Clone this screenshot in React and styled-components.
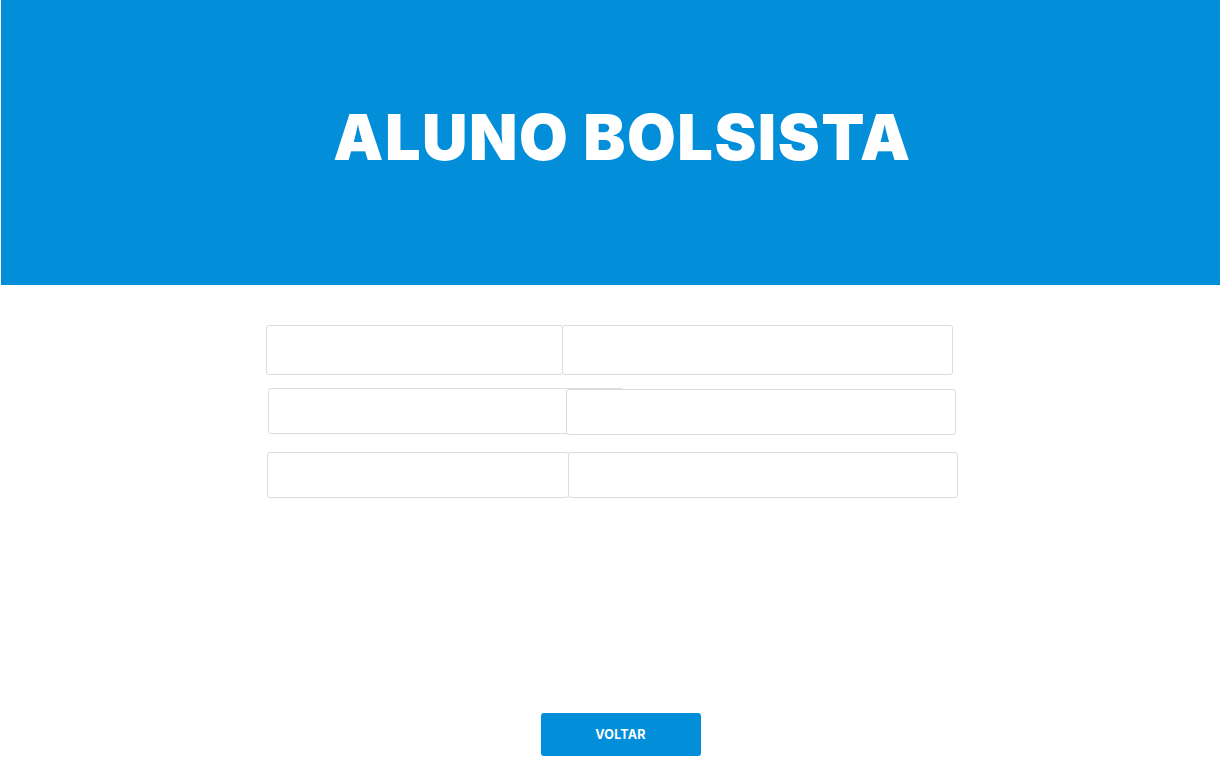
import React from "react";
import styled, { createGlobalStyle } from "styled-components";

const GlobalStyle = createGlobalStyle`
  html, body {
    margin: 0;
    padding: 0;
    background: #ffffff;
    font-family: "Inter", "Liberation Sans", sans-serif;
  }
`;

const Page = styled.div`
  width: 1220px;
  min-height: 768px;
  display: flex;
  flex-direction: column;
`;

const Banner = styled.header`
  margin-left: 1px;
  height: 285px;
  background: #038ed9;
  display: flex;
  align-items: center;
  justify-content: center;
  padding-left: 24px;
  box-sizing: border-box;
`;

const Title = styled.h1`
  margin: 0 0 10px 0;
  color: #ffffff;
  font-family: "Inter", "Liberation Sans", sans-serif;
  font-weight: 900;
  font-size: 63px;
  letter-spacing: 1.5px;
  line-height: 1;
  text-transform: uppercase;
`;

const Form = styled.form`
  display: flex;
  flex-direction: column;
  padding-top: 40px;
`;

const Row = styled.div`
  display: flex;
  align-items: flex-start;
  padding-left: ${({ $indent }) => $indent}px;
  margin-top: ${({ $gap }) => $gap}px;
`;

const Field = styled.input`
  box-sizing: border-box;
  width: ${({ $w }) => $w}px;
  height: ${({ $h }) => $h}px;
  margin-left: ${({ $shift }) => $shift || 0}px;
  margin-top: ${({ $drop }) => $drop || 0}px;
  border: 1px solid #dcdcdc;
  border-radius: 3px;
  background: #ffffff;
  padding: 0 12px;
  font-size: 14px;
  outline: none;
  position: relative;
`;

const Footer = styled.div`
  display: flex;
  justify-content: center;
  padding-left: 21px;
  margin-top: 215px;
`;

const BackButton = styled.button`
  width: 160px;
  height: 43px;
  border: none;
  border-radius: 3px;
  background: #038ed9;
  color: #ffffff;
  font-family: "Inter", "Liberation Sans", sans-serif;
  font-weight: 700;
  font-size: 12.5px;
  letter-spacing: 0.2px;
  cursor: pointer;
`;

const rows = [
  { indent: 266, gap: 0, left: { w: 297, h: 50 }, right: { w: 391, h: 50, shift: -1 } },
  { indent: 268, gap: 13, left: { w: 356, h: 46 }, right: { w: 390, h: 46, shift: -58, drop: 1 } },
  { indent: 267, gap: 17, left: { w: 302, h: 46 }, right: { w: 390, h: 46, shift: -1 } },
];

export default function App() {
  return (
    <Page>
      <GlobalStyle />
      <Banner>
        <Title>Aluno Bolsista</Title>
      </Banner>
      <Form onSubmit={(e) => e.preventDefault()}>
        {rows.map((row, i) => (
          <Row key={i} $indent={row.indent} $gap={row.gap}>
            <Field $w={row.left.w} $h={row.left.h} />
            <Field
              $w={row.right.w}
              $h={row.right.h}
              $shift={row.right.shift}
              $drop={row.right.drop}
            />
          </Row>
        ))}
      </Form>
      <Footer>
        <BackButton type="button">VOLTAR</BackButton>
      </Footer>
    </Page>
  );
}
